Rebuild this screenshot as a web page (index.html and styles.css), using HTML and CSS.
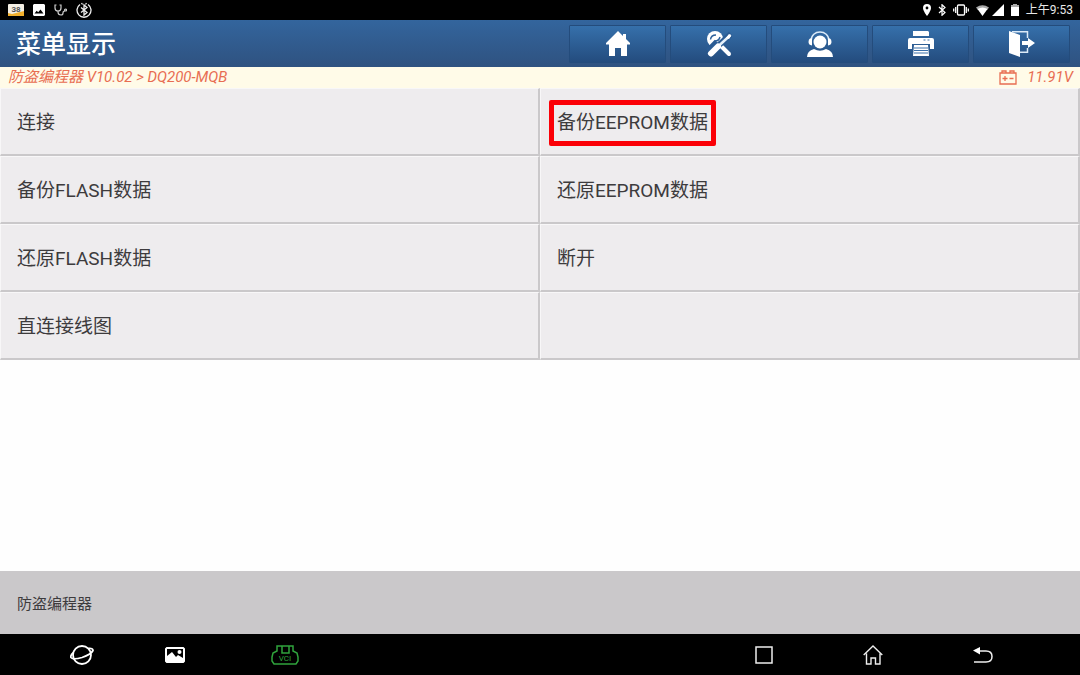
FILE: index.html
```html
<!DOCTYPE html>
<html lang="zh-CN">
<head>
<meta charset="utf-8">
<meta name="viewport" content="width=device-width, initial-scale=1">
<title>菜单显示</title>
<link rel="stylesheet" href="styles.css">
</head>
<body>
<div class="screen">
  <div class="status-bar">
    <div class="status-left">
      <svg width="16" height="13" viewBox="0 0 16 13"><rect width="16" height="12" rx="1" fill="#f4efe4"/><path d="M0 9l4 1 4-1 8-2v5H0z" fill="#f2b02c"/><text x="8" y="8" text-anchor="middle" class="badge-text">38</text></svg>
      <svg width="12" height="12" viewBox="0 0 12 12"><path fill="#fff" fill-rule="evenodd" d="M1 0h10l1 1v10l-1 1H1l-1-1V1zM1.500 9.500h9L7.500 5.500 5.200 8.200 3.700 6.800z"/></svg>
      <svg width="13" height="12" viewBox="0 0 13 12" fill="none" stroke="#ccc" stroke-width="1.200"><path d="M2.500 1H1v3q0 3 3 3t3-3V1H5.500M4 7v1q0 3 3 3 2 0 2-2t2-2"/><circle cx="11.500" cy="6" r="1"/></svg>
      <svg width="16" height="16" viewBox="0 0 16 16" fill="none" stroke="#eee" stroke-width="1.300"><path d="M4 2.500a7 7 0 1 0 8 0M5.500 1l1 1.500M10.500 1l-1 1.500"/><path d="M5 5.500l6 5-3 2.500V3l3 2.500-6 5"/></svg>
    </div>
    <div class="status-right">
      <svg width="8" height="12" viewBox="0 0 8 12"><path fill="#fff" fill-rule="evenodd" d="M4 0a4 4 0 0 1 4 4c0 3-4 8-4 8S0 7 0 4a4 4 0 0 1 4-4zM4 2.600a1.400 1.400 0 1 0 0 2.800 1.400 1.400 0 0 0 0-2.800z"/></svg>
      <svg width="8" height="12" viewBox="0 0 8 12" fill="none" stroke="#fff" stroke-width="1.200"><path d="M1 3l6 5.500L4 11.300V.7L7 3.500 1 9"/></svg>
      <svg width="16" height="12" viewBox="0 0 16 12" fill="none" stroke="#fff" stroke-width="1.300"><rect x="4.500" y="1" width="7" height="10" rx="1"/><path d="M2.700 3v6M.7 4.500v3M13.300 3v6M15.300 4.500v3"/></svg>
      <svg class="wifi" width="13" height="11" viewBox="0 0 13 11"><path fill="#aaa" d="M0 2.500Q6.500-2 13 2.500L11 5H2z"/><path fill="#fff" d="M1.500 4Q6.500 1 11.500 4l-5 7z"/></svg>
      <svg width="12" height="12" viewBox="0 0 12 12"><path fill="#fff" d="M12 0v12H0z"/></svg>
      <svg width="8" height="12" viewBox="0 0 8 12"><path fill="#aaa" d="M2 0h4v1h2v3H0V1h2z"/><path fill="#fff" d="M0 3h8v9H0z"/></svg>
      <span>上午9:53</span>
    </div>
  </div>

  <header class="header">
    <h1 class="title">菜单显示</h1>
    <div class="toolbar">
      <button class="tool" aria-label="主页"><svg width="24" height="25" viewBox="0 0 24 25"><path fill="#fff" d="M12 0l5 5V3h3v5l4 4v1.500h-3V25h-6v-8H9v8H3V13.500H0V12z"/></svg></button>
      <button class="tool" aria-label="诊断工具"><svg width="26" height="26" viewBox="0 0 26 26"><path d="M15 15l8 8" stroke="#fff" stroke-width="4" stroke-linecap="round"/><circle cx="9" cy="8" r="8" fill="#fff"/><path d="M4.500 8.500Q5 4 10 4M9 10q4 0 5-4" fill="none" stroke="#2d609a" stroke-width="1.500"/><path d="M25 3L13 14" stroke="#2b5c94" stroke-width="6"/><path d="M12 12l-9 9" stroke="#2b5c94" stroke-width="9"/><path d="M24 4.500L12 15.500" stroke="#e6f1fa" stroke-width="2.500" stroke-linecap="round"/><path d="M23 3l2 2-2 3-3-1z" fill="#fff"/><path d="M12 15.500l-7 7" stroke="#fff" stroke-width="6" stroke-linecap="round"/></svg></button>
      <button class="tool" aria-label="客服"><svg width="26" height="26" viewBox="0 0 26 26"><circle cx="13" cy="11" r="6.500" fill="#fff"/><path d="M4 10C4-2 22-2 22 10" fill="none" stroke="#dbeaf8" stroke-width="1.500"/><path d="M3 7.500h2v7Q1.500 14 1.500 11T3 7.500zM23 7.500h-2v7q3.500-.5 3.500-3.500T23 7.500zM0 26q0-6 7-8 6 3.500 12 0 7 2 7 8z" fill="#fff"/></svg></button>
      <button class="tool" aria-label="打印"><svg width="26" height="26" viewBox="0 0 26 26"><path fill="#fff" d="M5 0h15l1 1v4H5zM2 7h22q2 0 2 2v9h-4v-5H4v5H0V9q0-2 2-2zM6 14h14l1 11H5z"/><path d="M15.500 9h2M19.500 9h2M6 17h14M6 19.500h14M6 22h14" stroke="#3b70aa" stroke-width="1.200"/></svg></button>
      <button class="tool" aria-label="退出"><svg width="26" height="26" viewBox="0 0 26 26"><path fill="#fff" d="M0 0l11 4v22L0 22zM13 10h6V7l7 5-7 5v-3h-6z"/><path d="M3 .8h15.500V7M18.500 17v4.200H11" fill="none" stroke="#dbeaf8" stroke-width="1.500"/></svg></button>
    </div>
  </header>

  <div class="path-bar">
    <span>防盗编程器 V10.02 &gt; DQ200-MQB</span>
    <span class="voltage">
      <svg width="18" height="15" viewBox="0 0 18 15" fill="none" stroke="#e86d52" stroke-width="1.300"><path d="M1 3h16v11H1zM3 3V1h4v2M11 3V1h4v2M3.500 8.500h5M6 6v5M10.500 8.500h4"/></svg>
      <span>11.91V</span>
    </span>
  </div>

  <main class="content">
    <div class="menu">
      <button class="item">连接</button>
      <button class="item"><span class="highlight">备份EEPROM数据</span></button>
      <button class="item">备份FLASH数据</button>
      <button class="item">还原EEPROM数据</button>
      <button class="item">还原FLASH数据</button>
      <button class="item">断开</button>
      <button class="item">直连接线图</button>
      <div class="item"></div>
    </div>
  </main>

  <footer class="footer">防盗编程器</footer>

  <nav class="nav-bar">
    <div class="nav-group apps">
      <button class="nav-button" aria-label="浏览器"><svg width="24" height="22" viewBox="0 0 24 22" fill="none" stroke="#fff" stroke-width="1.800"><circle cx="12" cy="11" r="9"/><path d="M3.500 8.500Q0 11.500 1 13.500 3 16 12 13.500 21 10.500 23 6.500 23 4 18.500 4.500"/></svg></button>
      <button class="nav-button" aria-label="截图"><svg width="20" height="16" viewBox="0 0 20 16"><path fill="#fff" fill-rule="evenodd" d="M1.500 0h17L20 1.500v13L18.500 16h-17L0 14.500v-13zM2 2v7l5-4 4 5 2-2 5 3V2z"/><circle cx="14.500" cy="5" r="2" fill="#fff"/></svg></button>
      <button class="nav-button vci" aria-label="VCI"><svg width="28" height="20" viewBox="0 0 28 20" fill="none" stroke="#2fa33c" stroke-width="1.500"><path d="M6 1h16v5l4 2 1 4v4l-2 3H3l-2-3v-4l1-4 4-2zM11 1v7h7V1"/><text x="14" y="16" text-anchor="middle" class="vci-text">VCI</text></svg></button>
    </div>
    <div class="nav-group system">
      <button class="nav-button" aria-label="最近任务"><svg width="18" height="18" viewBox="0 0 18 18"><rect x="1" y="1" width="16" height="16" fill="none" stroke="#eee" stroke-width="1.500"/></svg></button>
      <button class="nav-button" aria-label="主屏幕"><svg width="20" height="20" viewBox="0 0 20 20" fill="none" stroke="#eee" stroke-width="1.400"><path d="M.7 10L10 1l9.300 9M3.500 8.500V19H8v-6h4.500v6H17V8.500"/></svg></button>
      <button class="nav-button" aria-label="返回"><svg width="20" height="18" viewBox="0 0 20 18"><path d="M5 5h8q6 0 6 5.500T13 16H1" fill="none" stroke="#eee" stroke-width="1.500"/><path d="M0 4.500L7 1v7.500z" fill="#fff"/></svg></button>
    </div>
  </nav>
</div>
</body>
</html>
```
FILE: styles.css
```css
* { box-sizing: border-box; }
body {
  margin: 0;
  font-family: Roboto, "Noto Sans CJK SC", sans-serif;
  color: #3d3b3d;
  background: #fff;
}
button {
  margin: 0;
  padding: 0;
  border: 0;
  background: none;
  font: inherit;
  color: inherit;
}
svg { display: block; flex: none; }
.screen { min-height: 100vh; display: flex; flex-direction: column; }

.status-bar {
  height: 20px;
  padding: 0 7px 0 8px;
  display: flex;
  justify-content: space-between;
  background: #000;
  color: #e8e8e8;
  font-size: 12px;
  line-height: 20px;
}
.status-left { display: flex; align-items: center; gap: 9px; }
.status-right { display: flex; align-items: center; gap: 7px; }
.wifi { margin-right: -4px; }
.badge-text { font-size: 8px; font-weight: 700; fill: #555; }

.header {
  height: 47px;
  padding: 0 10px 0 16px;
  display: flex;
  align-items: center;
  justify-content: space-between;
  background: linear-gradient(#33659d, #2f5280);
}
.title {
  margin: 0;
  padding-top: 2px;
  font-size: 25px;
  font-weight: 500;
  line-height: 36px;
  color: #fff;
}
.toolbar { display: flex; gap: 4px; }
.tool {
  width: 97px;
  height: 38px;
  display: flex;
  align-items: center;
  justify-content: center;
  border: 1px solid #244c7c;
  border-radius: 1px;
  background: linear-gradient(#3670ab, #244c7e);
}

.path-bar {
  height: 21px;
  padding: 0 7px 0 8px;
  display: flex;
  align-items: center;
  justify-content: space-between;
  background: #fffbe8;
  color: #e86d52;
  font-size: 15px;
  font-style: italic;
  line-height: 21px;
}
.voltage { display: flex; align-items: center; gap: 10px; }

.content { flex: 1; background: #fefefe; }
.menu { display: grid; grid-template-columns: 1fr 1fr; }
.item {
  height: 68px;
  padding: 2px 16px 0;
  display: flex;
  align-items: center;
  border: 1px solid #f8f7f8;
  border-right: 2px solid #cac8ca;
  border-bottom: 2px solid #cac8ca;
  background: #eeecee;
  font-size: 19px;
  line-height: 24px;
  text-align: left;
}
.highlight {
  margin-left: -8px;
  padding: 6px 3px;
  border: 5px solid #fb0007;
  border-radius: 2px;
}

.footer {
  height: 63px;
  padding: 0 17px;
  display: flex;
  align-items: center;
  background: #cac8ca;
  font-size: 15px;
}

.nav-bar {
  height: 41px;
  padding: 0 87px 0 70px;
  display: flex;
  align-items: center;
  justify-content: space-between;
  background: #000;
}
.nav-group { display: flex; align-items: center; }
.apps { gap: 71px; }
.vci { margin-left: 15px; }
.system { gap: 90px; }
.vci-text { font-size: 8px; fill: #2fa33c; stroke: none; }
```
